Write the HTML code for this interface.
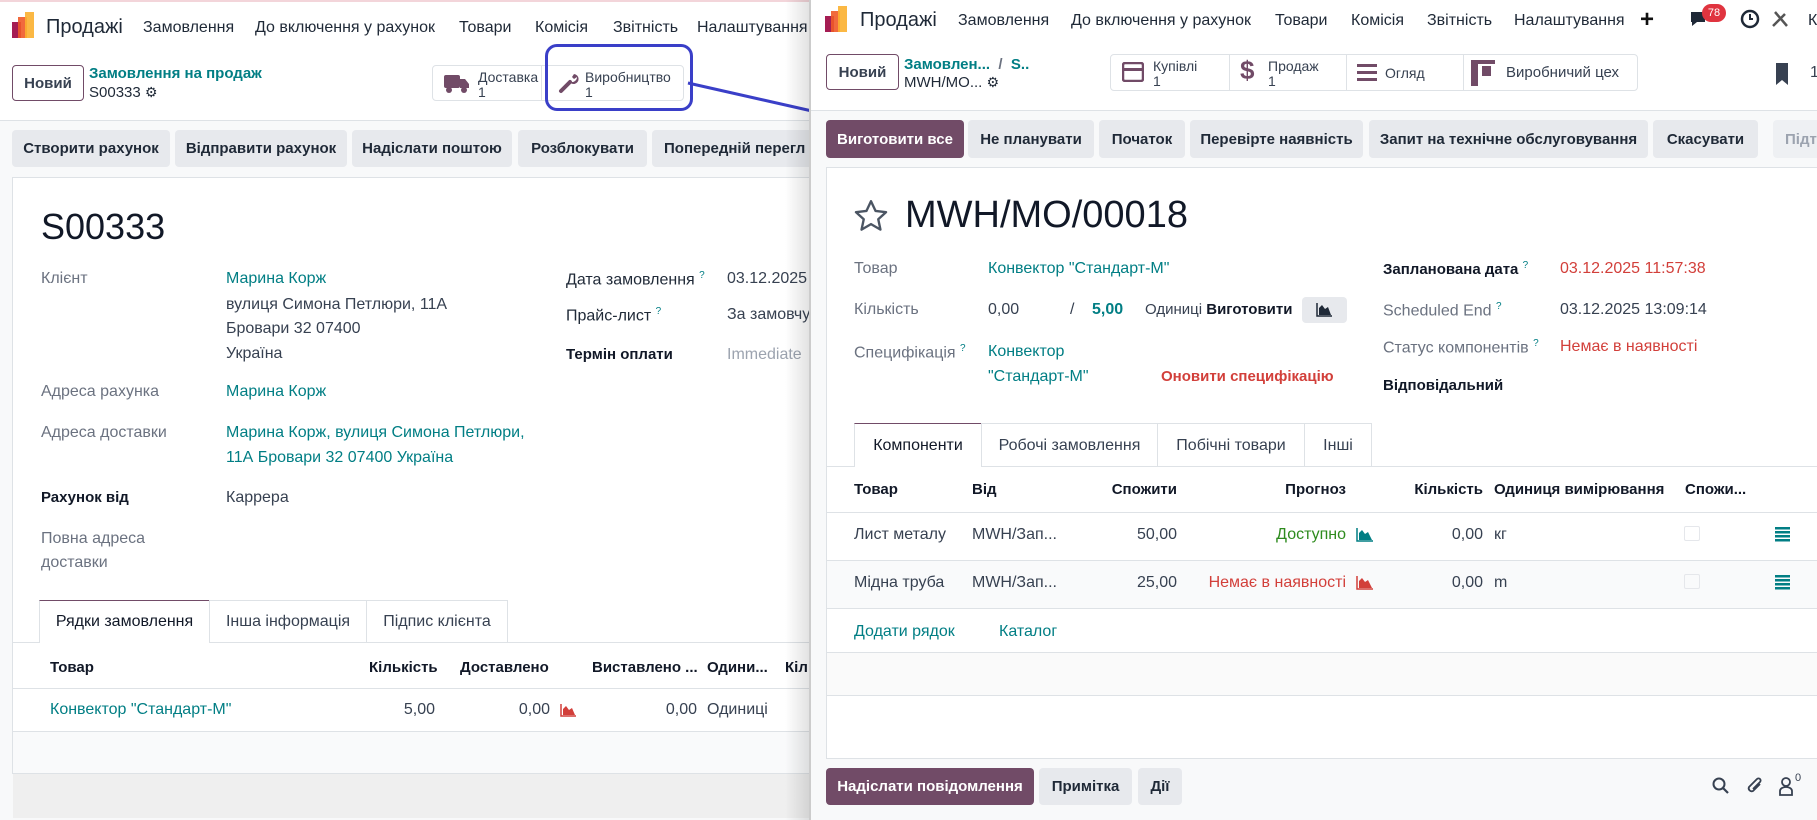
<!DOCTYPE html>
<html><head><meta charset="utf-8"><style>
*{box-sizing:border-box;margin:0;padding:0}
body{width:1817px;height:820px;overflow:hidden;position:relative;background:#fff;font-family:"Liberation Sans","DejaVu Sans",sans-serif;font-size:16px;color:#374151}
.a{position:absolute;white-space:nowrap}
.t{color:#017e84}
.r{color:#d23f3a}
.b{font-weight:bold;color:#111827;font-size:15px}
.g{color:#6b7280}
.btn{position:absolute;background:#e7e9ed;border-radius:4px;font-weight:bold;color:#1f2937;display:flex;align-items:center;justify-content:center;font-size:15px}
.ln{position:absolute;height:1px;background:#dee2e6}
.logo{position:absolute;width:24px;height:26px}
.menu span{position:absolute;top:19px;font-size:16px;color:#1f2937}
.stat{position:absolute;border:1px solid #dee2e6;border-radius:4px;background:#fff}
.stat div{position:absolute;top:0;height:100%;border-right:1px solid #dee2e6;font-size:14px;line-height:15px;color:#374151;padding-top:4px}
</style></head><body>
<!-- LEFT WINDOW -->
<div class="a" style="left:0;top:0;width:811px;height:2px;background:#f3d5da"></div>
<svg class="logo" style="left:12px;top:12px" viewBox="0 0 24 26"><rect x="0" y="10" width="9" height="16" fill="#a51d53"/><rect x="6" y="5" width="9" height="21" fill="#f05a28" opacity=".9"/><rect x="13" y="0" width="9" height="26" fill="#fbb030" opacity=".9"/></svg>
<div class="a" style="left:46px;top:16px;font-size:20px;color:#1f2937">Продажі</div>
<div class="menu"><span style="left:143px">Замовлення</span><span style="left:255px">До включення у рахунок</span><span style="left:459px">Товари</span><span style="left:535px">Комісія</span><span style="left:613px">Звітність</span><span style="left:697px">Налаштування</span></div>
<div class="a" style="left:12px;top:65px;width:72px;height:36px;border:1px solid #714b67;border-radius:4px;font-weight:bold;color:#374151;display:flex;align-items:center;justify-content:center;font-size:15px">Новий</div>
<div class="a t" style="left:89px;top:65px;font-weight:bold;font-size:15px">Замовлення на продаж</div>
<div class="a" style="left:89px;top:84px;font-size:15px;color:#1f2937">S00333 <span style="font-size:14px">⚙</span></div>
<div class="stat" style="left:432px;top:65px;width:252px;height:36px">
 <div style="left:0;width:109px;padding-left:45px">Доставка<br>1</div>
 <div style="left:109px;width:143px;padding-left:43px;border-right:none">Виробництво<br>1</div>
</div>
<svg class="a" style="left:444px;top:72px" width="26" height="22" viewBox="0 0 26 22"><rect x="0" y="3" width="16" height="13" rx="2" fill="#714b67"/><path d="M16 7h5l4 5v4h-9z" fill="#714b67"/><circle cx="5" cy="18" r="3" fill="#714b67"/><circle cx="20" cy="18" r="3" fill="#714b67"/></svg>
<svg class="a" style="left:558px;top:72px" width="22" height="22" viewBox="0 0 22 22"><path d="M3 19 L12 10" stroke="#714b67" stroke-width="4" stroke-linecap="round"/><path d="M11 9a5 5 0 1 0 5-7l-2 3 2 2 3-2a5 5 0 0 1-8 4z" fill="#714b67"/></svg>
<div class="a" style="left:545px;top:44px;width:148px;height:67px;border:3px solid #3a3fc8;border-radius:12px"></div>
<svg class="a" style="left:680px;top:75px" width="140" height="45"><line x1="8" y1="8" x2="132" y2="36" stroke="#3a3fc8" stroke-width="3"/></svg>
<div class="ln" style="left:0;top:120px;width:811px"></div>
<div class="a" style="left:0;top:121px;width:811px;height:699px;background:#f8f9fa"></div>
<div class="btn" style="left:12px;top:130px;width:158px;height:37px">Створити рахунок</div>
<div class="btn" style="left:175px;top:130px;width:172px;height:37px">Відправити рахунок</div>
<div class="btn" style="left:352px;top:130px;width:160px;height:37px">Надіслати поштою</div>
<div class="btn" style="left:518px;top:130px;width:129px;height:37px">Розблокувати</div>
<div class="btn" style="left:652px;top:130px;width:170px;height:37px;justify-content:flex-start;padding-left:12px">Попередній перегл</div>
<div class="a" style="left:12px;top:177px;width:810px;height:597px;background:#fff;border:1px solid #dee2e6"></div>
<div class="a" style="left:41px;top:206px;font-size:36px;font-weight:500;color:#111827">S00333</div>
<div class="a g" style="left:41px;top:270px">Клієнт</div>
<div class="a t" style="left:226px;top:270px">Марина Корж</div>
<div class="a" style="left:226px;top:296px">вулиця Симона Петлюри, 11А</div>
<div class="a" style="left:226px;top:320px">Бровари 32 07400</div>
<div class="a" style="left:226px;top:345px">Україна</div>
<div class="a g" style="left:41px;top:383px">Адреса рахунка</div>
<div class="a t" style="left:226px;top:383px">Марина Корж</div>
<div class="a g" style="left:41px;top:424px">Адреса доставки</div>
<div class="a t" style="left:226px;top:424px">Марина Корж, вулиця Симона Петлюри,</div>
<div class="a t" style="left:226px;top:449px">11А Бровари 32 07400 Україна</div>
<div class="a b" style="left:41px;top:489px">Рахунок від</div>
<div class="a" style="left:226px;top:489px">Каррера</div>
<div class="a g" style="left:41px;top:530px">Повна адреса</div>
<div class="a g" style="left:41px;top:554px">доставки</div>
<div class="a" style="left:566px;top:270px;color:#1f2937">Дата замовлення <sup class="t" style="font-size:10px">?</sup></div>
<div class="a" style="left:727px;top:270px">03.12.2025</div>
<div class="a" style="left:566px;top:306px;color:#1f2937">Прайс-лист <sup class="t" style="font-size:10px">?</sup></div>
<div class="a" style="left:727px;top:306px">За замовчу</div>
<div class="a b" style="left:566px;top:346px">Термін оплати</div>
<div class="a" style="left:727px;top:346px;color:#9ca3af">Immediate</div>
<div class="ln" style="left:13px;top:642px;width:798px"></div>
<div class="a" style="left:39px;top:600px;width:171px;height:43px;background:#fff;border:1px solid #dee2e6;border-top:1px solid #714b67;border-bottom:none;text-align:center;padding-top:12px;color:#111827">Рядки замовлення</div>
<div class="a" style="left:209px;top:600px;width:158px;height:42px;border:1px solid #dee2e6;border-bottom:none;text-align:center;padding-top:12px">Інша інформація</div>
<div class="a" style="left:366px;top:600px;width:142px;height:42px;border:1px solid #dee2e6;border-bottom:none;text-align:center;padding-top:12px">Підпис клієнта</div>
<div class="a b" style="left:50px;top:659px">Товар</div>
<div class="a b" style="left:369px;top:659px">Кількість</div>
<div class="a b" style="left:460px;top:659px">Доставлено</div>
<div class="a b" style="left:592px;top:659px">Виставлено ...</div>
<div class="a b" style="left:707px;top:659px">Одини...</div>
<div class="a b" style="left:785px;top:659px">Кіл</div>
<div class="ln" style="left:13px;top:688px;width:798px"></div>
<div class="a t" style="left:50px;top:701px">Конвектор "Стандарт-М"</div>
<div class="a" style="left:395px;top:701px;width:40px;text-align:right">5,00</div>
<div class="a" style="left:510px;top:701px;width:40px;text-align:right">0,00</div>
<svg class="a" style="left:560px;top:703px" width="17" height="14"><path d="M1 1V13H16" stroke="#d23f3a" fill="none" stroke-width="1.5"/><path d="M3 12V6l3-3 3 4 3-2 3 7z" fill="#d23f3a"/></svg>
<div class="a" style="left:657px;top:701px;width:40px;text-align:right">0,00</div>
<div class="a" style="left:707px;top:701px">Одиниці</div>
<div class="ln" style="left:13px;top:731px;width:798px"></div>
<div class="a" style="left:13px;top:732px;width:798px;height:41px;background:#f9fafb"></div>
<div class="ln" style="left:13px;top:773px;width:798px"></div>
<div class="a" style="left:13px;top:774px;width:798px;height:44px;background:#efefef"></div>
<div class="a" style="left:785px;top:0;width:26px;height:820px;background:linear-gradient(90deg,rgba(0,0,0,0),rgba(0,0,0,.12))"></div>

<!-- RIGHT WINDOW -->
<div class="a" style="left:809px;top:0;width:1008px;height:820px;background:#fff;border-left:2px solid #ccc"></div>
<svg class="logo" style="left:825px;top:6px" viewBox="0 0 24 26"><rect x="0" y="10" width="9" height="16" fill="#a51d53"/><rect x="6" y="5" width="9" height="21" fill="#f05a28" opacity=".9"/><rect x="13" y="0" width="9" height="26" fill="#fbb030" opacity=".9"/></svg>
<div class="a" style="left:860px;top:9px;font-size:20px;color:#1f2937">Продажі</div>
<div class="menu"><span style="left:958px;top:12px">Замовлення</span><span style="left:1071px;top:12px">До включення у рахунок</span><span style="left:1275px;top:12px">Товари</span><span style="left:1351px;top:12px">Комісія</span><span style="left:1427px;top:12px">Звітність</span><span style="left:1514px;top:12px">Налаштування</span></div>
<div class="a" style="left:1640px;top:6px;font-size:24px;font-weight:bold;color:#111">+</div>
<svg class="a" style="left:1688px;top:9px" width="22" height="22"><path d="M3 3h14v10H9l-5 4v-4H3z" fill="#1f2937"/></svg>
<div class="a" style="left:1702px;top:4px;width:24px;height:18px;border-radius:9px;background:#e0343f;color:#fff;font-size:11px;text-align:center;line-height:18px">78</div>
<svg class="a" style="left:1740px;top:9px" width="20" height="20"><circle cx="10" cy="10" r="8" stroke="#1f2937" stroke-width="2.5" fill="none"/><path d="M10 5v5h3" stroke="#1f2937" stroke-width="2" fill="none"/></svg>
<svg class="a" style="left:1770px;top:9px" width="20" height="20"><path d="M3 17L15 5M5 3l12 14" stroke="#555" stroke-width="2.5"/></svg>
<div class="a" style="left:1808px;top:12px;color:#1f2937">К</div>
<div class="a" style="left:826px;top:54px;width:73px;height:36px;border:1px solid #714b67;border-radius:4px;font-weight:bold;display:flex;align-items:center;justify-content:center;font-size:15px">Новий</div>
<div class="a t" style="left:904px;top:56px;font-weight:bold;font-size:15px">Замовлен... &nbsp;<span style="color:#6b7280">/</span>&nbsp; S..</div>
<div class="a" style="left:904px;top:74px;font-size:15px;color:#1f2937">MWH/MO... <span style="font-size:14px">⚙</span></div>
<div class="stat" style="left:1110px;top:54px;width:528px;height:37px">
 <div style="left:0;width:119px;padding-left:42px">Купівлі<br>1</div>
 <div style="left:119px;width:117px;padding-left:38px">Продаж<br>1</div>
 <div style="left:236px;width:117px;padding-left:38px;padding-top:11px">Огляд</div>
 <div style="left:353px;width:175px;padding-left:42px;padding-top:10px;border-right:none;font-size:15px">Виробничий цех</div>
</div>
<svg class="a" style="left:1122px;top:62px" width="22" height="20"><rect x="1" y="1" width="20" height="18" rx="2" stroke="#714b67" stroke-width="2.5" fill="none"/><rect x="1" y="6" width="20" height="3" fill="#714b67"/></svg>
<div class="a" style="left:1240px;top:55px;font-size:26px;font-weight:bold;color:#714b67">$</div>
<svg class="a" style="left:1357px;top:64px" width="20" height="17"><rect y="0" width="20" height="3" fill="#714b67"/><rect y="7" width="20" height="3" fill="#714b67"/><rect y="14" width="20" height="3" fill="#714b67"/></svg>
<svg class="a" style="left:1471px;top:60px" width="24" height="26"><rect x="0" y="0" width="24" height="4" fill="#714b67"/><rect x="0" y="0" width="7" height="26" fill="#714b67"/><rect x="11" y="6" width="9" height="10" fill="#714b67"/></svg>
<svg class="a" style="left:1775px;top:62px" width="14" height="24"><path d="M1 1h12v22l-6-5-6 5z" fill="#374151"/></svg>
<div class="a" style="left:1810px;top:64px">1</div>
<div class="ln" style="left:811px;top:110px;width:1006px"></div>
<div class="a" style="left:811px;top:111px;width:1006px;height:709px;background:#f8f9fa"></div>
<div class="btn" style="left:826px;top:120px;width:138px;height:38px;background:#714b67;color:#fff">Виготовити все</div>
<div class="btn" style="left:968px;top:120px;width:126px;height:38px">Не планувати</div>
<div class="btn" style="left:1099px;top:120px;width:86px;height:38px">Початок</div>
<div class="btn" style="left:1190px;top:120px;width:173px;height:38px">Перевірте наявність</div>
<div class="btn" style="left:1369px;top:120px;width:279px;height:38px">Запит на технічне обслуговування</div>
<div class="btn" style="left:1653px;top:120px;width:105px;height:38px">Скасувати</div>
<div class="btn" style="left:1773px;top:120px;width:60px;height:38px;background:#eef0f3;color:#9ca3af;justify-content:flex-start;padding-left:12px">Підт</div>
<div class="a" style="left:826px;top:167px;width:1000px;height:592px;background:#fff;border:1px solid #dee2e6"></div>
<svg class="a" style="left:853px;top:199px" width="36" height="34" viewBox="0 0 24 23"><path d="M12 1.5l3.1 6.6 7.1.8-5.3 4.8 1.5 7-6.4-3.7-6.4 3.7 1.5-7L1.8 8.9l7.1-.8z" fill="none" stroke="#4b5563" stroke-width="1.6" stroke-linejoin="round"/></svg>
<div class="a" style="left:905px;top:194px;font-size:38px;font-weight:500;color:#111827">MWH/MO/00018</div>
<div class="a g" style="left:854px;top:260px">Товар</div>
<div class="a t" style="left:988px;top:260px">Конвектор "Стандарт-М"</div>
<div class="a g" style="left:854px;top:301px">Кількість</div>
<div class="a" style="left:988px;top:301px">0,00</div>
<div class="a" style="left:1070px;top:301px">/</div>
<div class="a t" style="left:1092px;top:301px;font-weight:bold">5,00</div>
<div class="a" style="left:1145px;top:301px;font-size:15px">Одиниці <b style="color:#111827">Виготовити</b></div>
<div class="a" style="left:1302px;top:297px;width:45px;height:26px;background:#e7e9ed;border-radius:4px"></div>
<svg class="a" style="left:1316px;top:302px" width="17" height="15"><path d="M1 1V14H16" stroke="#1f2937" fill="none" stroke-width="1.5"/><path d="M3 13V6l3-3 3 4 3-2 3 8z" fill="#1f2937"/></svg>
<div class="a g" style="left:854px;top:343px">Специфікація <sup class="t" style="font-size:10px">?</sup></div>
<div class="a t" style="left:988px;top:343px">Конвектор</div>
<div class="a t" style="left:988px;top:368px">"Стандарт-М"</div>
<div class="a r" style="left:1161px;top:368px;font-weight:bold;font-size:15px">Оновити специфікацію</div>
<div class="a b" style="left:1383px;top:260px">Запланована дата <sup class="t" style="font-size:10px;font-weight:normal">?</sup></div>
<div class="a r" style="left:1560px;top:260px">03.12.2025 11:57:38</div>
<div class="a g" style="left:1383px;top:301px">Scheduled End <sup class="t" style="font-size:10px">?</sup></div>
<div class="a" style="left:1560px;top:301px">03.12.2025 13:09:14</div>
<div class="a g" style="left:1383px;top:338px">Статус компонентів <sup class="t" style="font-size:10px">?</sup></div>
<div class="a r" style="left:1560px;top:338px">Немає в наявності</div>
<div class="a b" style="left:1383px;top:377px">Відповідальний</div>
<div class="ln" style="left:827px;top:466px;width:990px"></div>
<div class="a" style="left:854px;top:423px;width:128px;height:44px;background:#fff;border:1px solid #dee2e6;border-top:1px solid #714b67;border-bottom:none;text-align:center;padding-top:13px;color:#111827">Компоненти</div>
<div class="a" style="left:981px;top:423px;width:177px;height:43px;border:1px solid #dee2e6;border-bottom:none;text-align:center;padding-top:13px">Робочі замовлення</div>
<div class="a" style="left:1157px;top:423px;width:148px;height:43px;border:1px solid #dee2e6;border-bottom:none;text-align:center;padding-top:13px">Побічні товари</div>
<div class="a" style="left:1304px;top:423px;width:68px;height:43px;border:1px solid #dee2e6;border-bottom:none;text-align:center;padding-top:13px">Інші</div>
<div class="a b" style="left:854px;top:481px">Товар</div>
<div class="a b" style="left:972px;top:481px">Від</div>
<div class="a b" style="left:1077px;top:481px;width:100px;text-align:right">Спожити</div>
<div class="a b" style="left:1246px;top:481px;width:100px;text-align:right">Прогноз</div>
<div class="a b" style="left:1383px;top:481px;width:100px;text-align:right">Кількість</div>
<div class="a b" style="left:1494px;top:481px">Одиниця вимірювання</div>
<div class="a b" style="left:1685px;top:481px">Спожи...</div>
<div class="ln" style="left:827px;top:512px;width:990px"></div>
<div class="a" style="left:854px;top:526px">Лист металу</div>
<div class="a" style="left:972px;top:526px">MWH/Зап...</div>
<div class="a" style="left:1097px;top:526px;width:80px;text-align:right">50,00</div>
<div class="a" style="left:1246px;top:526px;width:100px;text-align:right;color:#2e8b1e">Доступно</div>
<svg class="a" style="left:1356px;top:527px" width="18" height="15"><path d="M1 1V14H17" stroke="#017e84" fill="none" stroke-width="1.5"/><path d="M3 13V6l3-3 3 4 3-2 4 8z" fill="#017e84"/></svg>
<div class="a" style="left:1403px;top:526px;width:80px;text-align:right">0,00</div>
<div class="a" style="left:1494px;top:526px">кг</div>
<div class="a" style="left:1684px;top:526px;width:16px;height:15px;border:1px solid #e5e7eb;border-radius:2px"></div>
<svg class="a" style="left:1775px;top:527px" width="15" height="15"><g fill="#017e84"><rect y="0" width="15" height="2.5"/><rect y="4" width="15" height="2.5"/><rect y="8" width="15" height="2.5"/><rect y="12" width="15" height="2.5"/></g></svg>
<div class="ln" style="left:827px;top:560px;width:990px"></div>
<div class="a" style="left:827px;top:561px;width:990px;height:47px;background:#f9fafb"></div>
<div class="a" style="left:854px;top:574px">Мідна труба</div>
<div class="a" style="left:972px;top:574px">MWH/Зап...</div>
<div class="a" style="left:1097px;top:574px;width:80px;text-align:right">25,00</div>
<div class="a r" style="left:1206px;top:574px;width:140px;text-align:right">Немає в наявності</div>
<svg class="a" style="left:1356px;top:575px" width="18" height="15"><path d="M1 1V14H17" stroke="#d23f3a" fill="none" stroke-width="1.5"/><path d="M3 13V6l3-3 3 4 3-2 4 8z" fill="#d23f3a"/></svg>
<div class="a" style="left:1403px;top:574px;width:80px;text-align:right">0,00</div>
<div class="a" style="left:1494px;top:574px">m</div>
<div class="a" style="left:1684px;top:574px;width:16px;height:15px;border:1px solid #e5e7eb;border-radius:2px"></div>
<svg class="a" style="left:1775px;top:575px" width="15" height="15"><g fill="#017e84"><rect y="0" width="15" height="2.5"/><rect y="4" width="15" height="2.5"/><rect y="8" width="15" height="2.5"/><rect y="12" width="15" height="2.5"/></g></svg>
<div class="ln" style="left:827px;top:608px;width:990px"></div>
<div class="a t" style="left:854px;top:623px">Додати рядок</div>
<div class="a t" style="left:999px;top:623px">Каталог</div>
<div class="ln" style="left:827px;top:652px;width:990px"></div>
<div class="a" style="left:827px;top:653px;width:990px;height:42px;background:#fafafa"></div>
<div class="ln" style="left:827px;top:695px;width:990px"></div>
<div class="btn" style="left:826px;top:768px;width:208px;height:37px;background:#714b67;color:#fff">Надіслати повідомлення</div>
<div class="btn" style="left:1039px;top:768px;width:93px;height:37px">Примітка</div>
<div class="btn" style="left:1138px;top:768px;width:44px;height:37px">Дії</div>
<svg class="a" style="left:1712px;top:777px" width="18" height="18"><circle cx="7" cy="7" r="5.5" stroke="#374151" stroke-width="2" fill="none"/><path d="M11 11l5 5" stroke="#374151" stroke-width="2.2"/></svg>
<svg class="a" style="left:1746px;top:776px" width="18" height="20"><path d="M14 8l-7 7a3 3 0 0 1-4-4l8-8a2 2 0 0 1 3 3l-7 7" stroke="#374151" stroke-width="1.8" fill="none"/></svg>
<svg class="a" style="left:1778px;top:776px" width="16" height="20"><circle cx="8" cy="6" r="4" stroke="#374151" stroke-width="1.8" fill="none"/><path d="M2 19v-4a6 4 0 0 1 12 0v4z" stroke="#374151" stroke-width="1.8" fill="none"/></svg>
<div class="a" style="left:1795px;top:772px;font-size:11px">0</div>
</body></html>
